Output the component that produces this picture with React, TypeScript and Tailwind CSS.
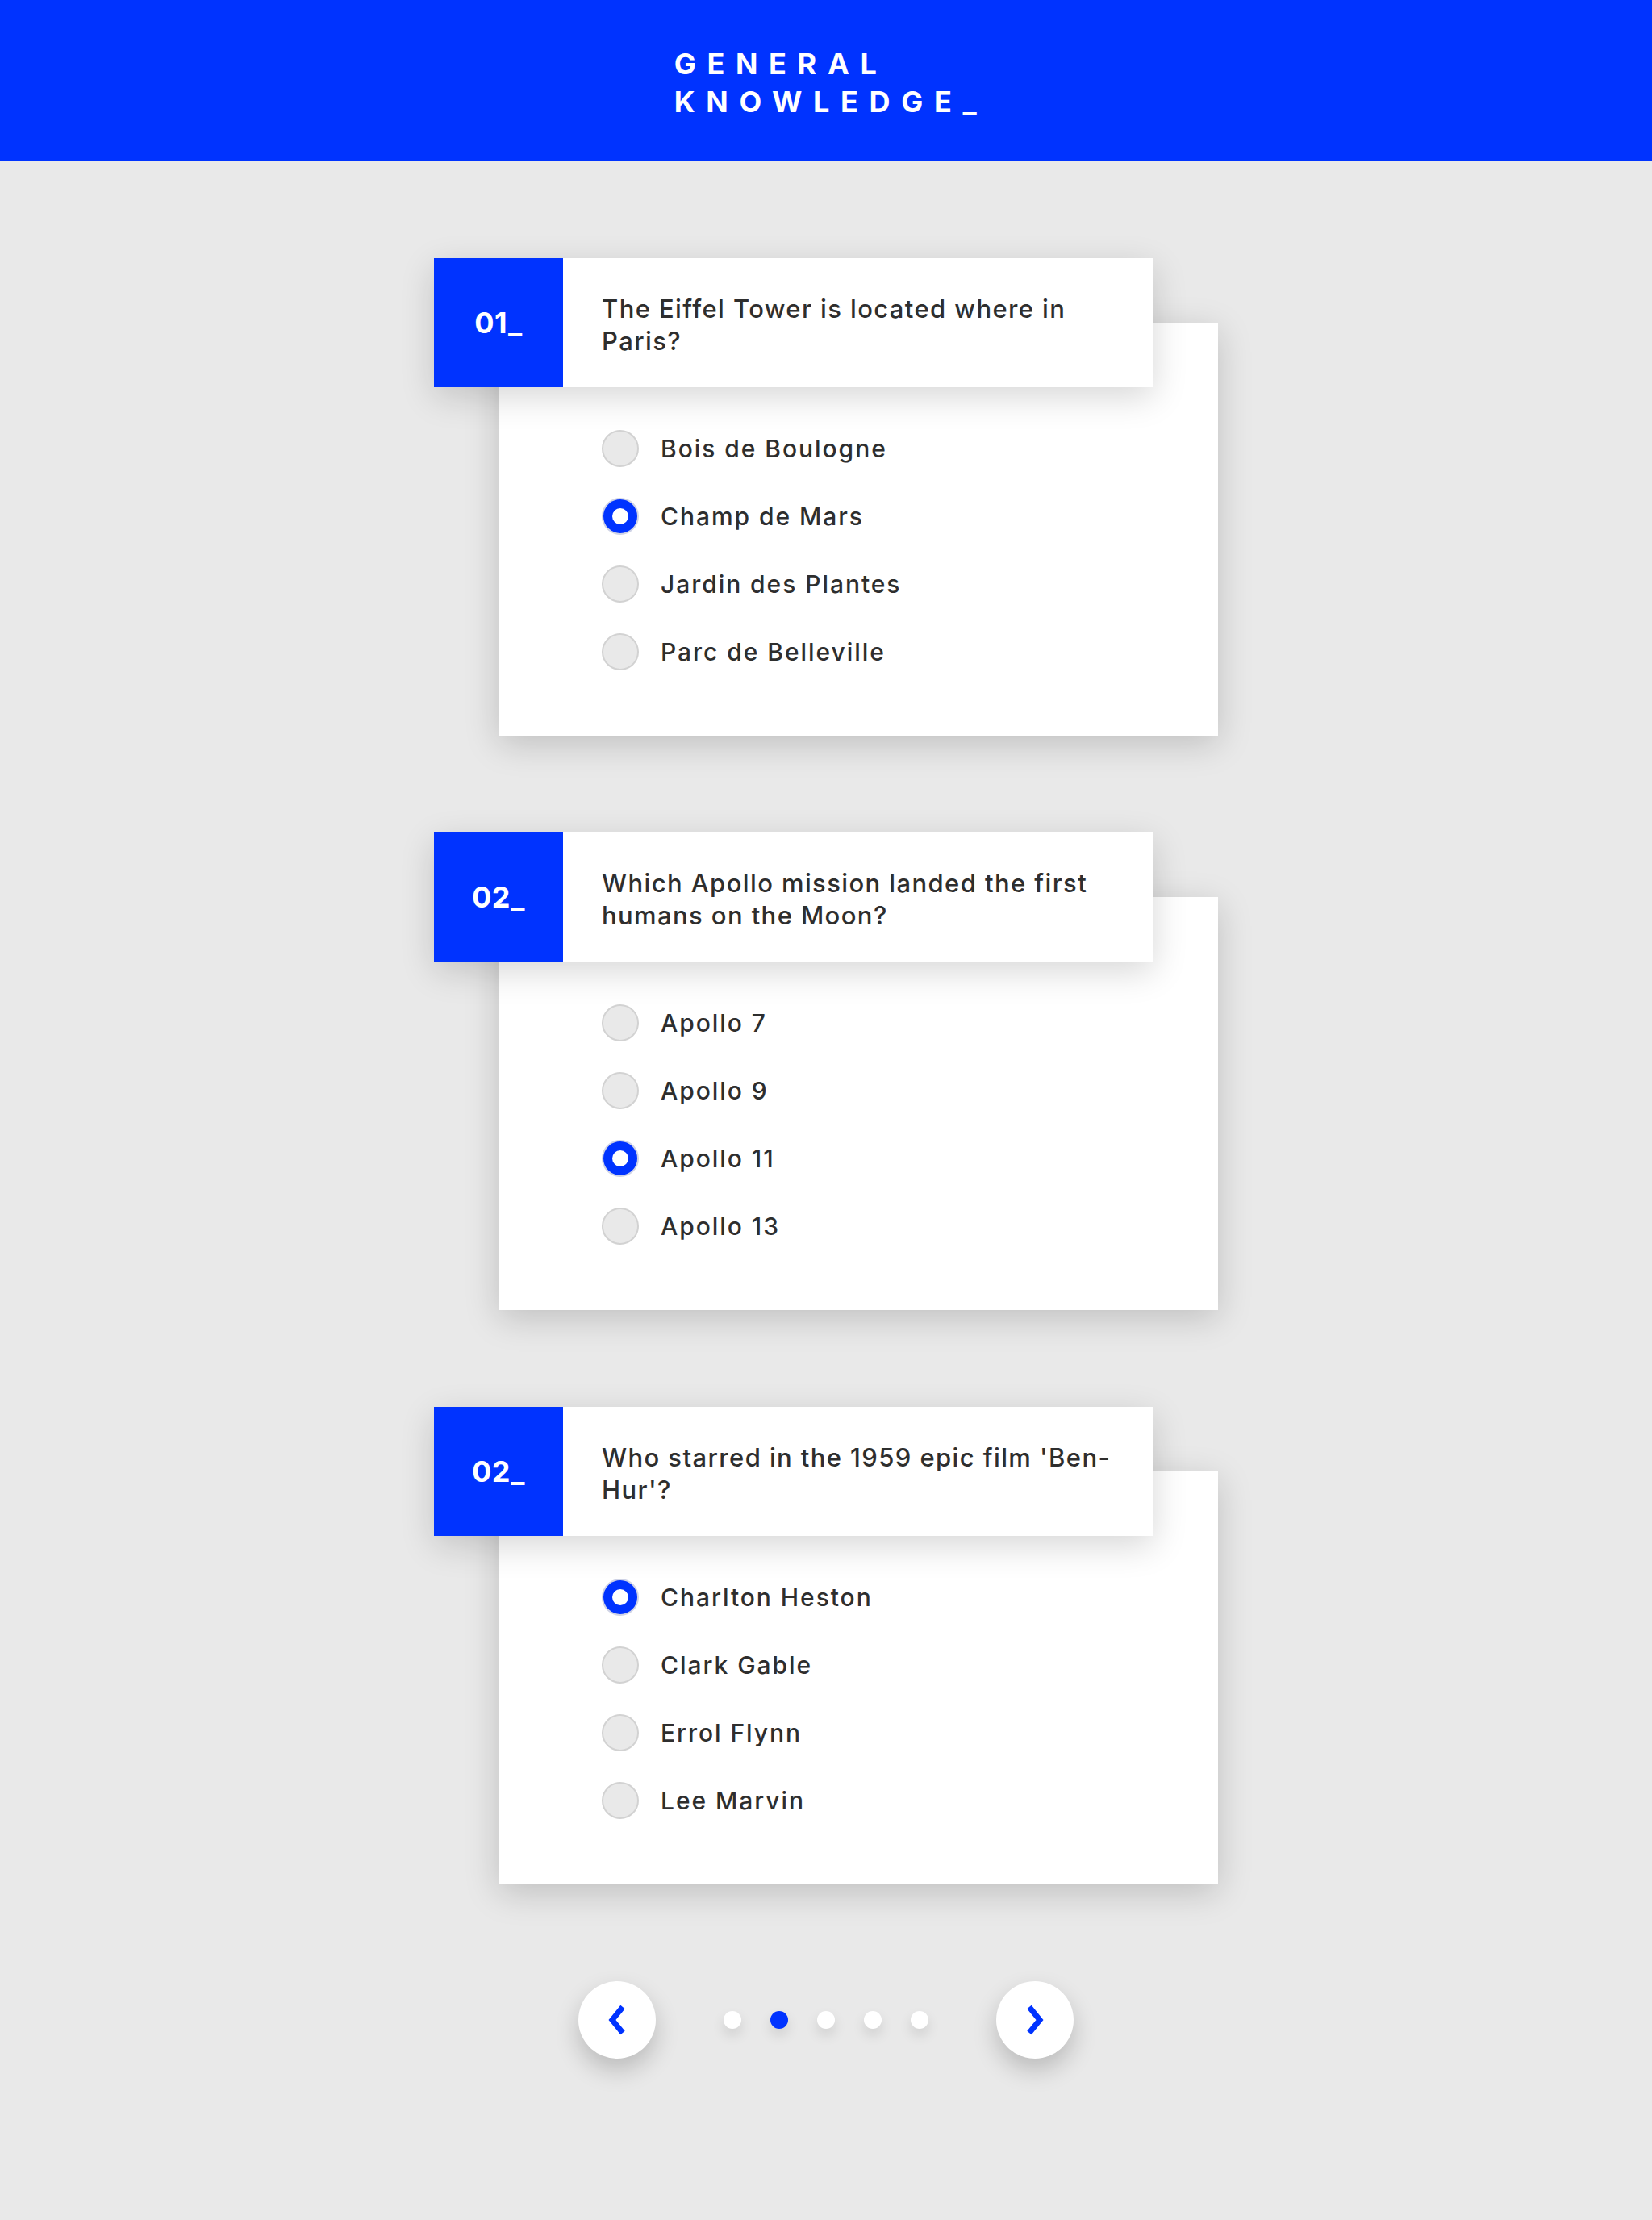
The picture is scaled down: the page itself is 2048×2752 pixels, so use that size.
import React from 'react';

const questions = [
  {
    num: '01_',
    text: 'The Eiffel Tower is located where in Paris?',
    options: ['Bois de Boulogne', 'Champ de Mars', 'Jardin des Plantes', 'Parc de Belleville'],
    selected: 1,
  },
  {
    num: '02_',
    text: 'Which Apollo mission landed the first humans on the Moon?',
    options: ['Apollo 7', 'Apollo 9', 'Apollo 11', 'Apollo 13'],
    selected: 2,
  },
  {
    num: '02_',
    text: "Who starred in the 1959 epic film 'Ben-Hur'?",
    options: ['Charlton Heston', 'Clark Gable', 'Errol Flynn', 'Lee Marvin'],
    selected: 0,
  },
];

export default function App() {
  return (
    <div className="w-[2048px] min-h-[2752px] bg-[#e9e9e9] font-['Inter','Liberation_Sans',sans-serif] flex flex-col items-center">
      <header className="w-full h-[200px] bg-[#0033ff] flex items-center justify-center">
        <h1 className="text-white font-bold text-[36px] leading-[47px] tracking-[0.38em] uppercase pt-[6px] pl-[12px]">
          General<br />Knowledge_
        </h1>
      </header>

      <main className="flex flex-col gap-[120px] pt-[120px]">
        {questions.map((q, i) => (
          <QuestionCard key={i} {...q} />
        ))}
      </main>

      <Pager />
    </div>
  );
}

function QuestionCard({ num, text, options, selected }: { num: string; text: string; options: string[]; selected: number }) {
  return (
    <section className="w-[972px] flex flex-col">
      <div className="relative z-10 flex w-[892px] h-[160px] shadow-[0_12px_40px_rgba(0,0,0,0.16)]">
        <div className="w-[160px] h-[160px] bg-[#0033ff] flex items-center justify-center text-white text-[36px] font-bold tracking-[0.02em]">
          {num}
        </div>
        <div className="flex-1 bg-white flex items-center pl-[48px] pr-[50px] pt-[6px]">
          <p className="text-[#2e2e2e] text-[31px] leading-[40px] font-medium tracking-[0.045em]">{text}</p>
        </div>
      </div>
      <div className="ml-[80px] -mt-[80px] w-[892px] bg-white pt-[114px] pb-[62px] pl-[128px] shadow-[0_10px_40px_rgba(0,0,0,0.18)]">
        {options.map((o, i) => (
          <label key={o} className="h-[84px] flex items-center gap-[27px]">
            <Radio checked={i === selected} />
            <span className="text-[#2e2e2e] text-[30px] font-medium tracking-[0.065em]">{o}</span>
          </label>
        ))}
      </div>
    </section>
  );
}

function Radio({ checked }: { checked: boolean }) {
  if (checked) {
    return (
      <span className="w-[46px] h-[46px] rounded-full bg-[#0033ff] border-2 border-[#cfd3e6] flex items-center justify-center">
        <span className="w-[20px] h-[20px] rounded-full bg-white" />
      </span>
    );
  }
  return <span className="w-[46px] h-[46px] rounded-full bg-[#e9e9e9] border-2 border-[#d2d2d2]" />;
}

function Pager() {
  return (
    <nav className="flex items-center gap-[84px] mt-[120px]">
      <button className="w-[96px] h-[96px] rounded-full bg-white flex items-center justify-center shadow-[0_14px_30px_rgba(0,0,0,0.2)]">
        <svg width="30" height="40" viewBox="0 0 30 40">
          <polyline points="22,4 9,20 22,36" fill="none" stroke="#0033ff" strokeWidth="7" />
        </svg>
      </button>
      <div className="flex items-center gap-[36px]">
        {[0, 1, 2, 3, 4].map((d) => (
          <span
            key={d}
            className={
              d === 1
                ? 'w-[22px] h-[22px] rounded-full bg-[#0033ff] shadow-[0_8px_16px_rgba(0,0,0,0.12)]'
                : 'w-[22px] h-[22px] rounded-full bg-white shadow-[0_8px_16px_rgba(0,0,0,0.12)]'
            }
          />
        ))}
      </div>
      <button className="w-[96px] h-[96px] rounded-full bg-white flex items-center justify-center shadow-[0_14px_30px_rgba(0,0,0,0.2)]">
        <svg width="30" height="40" viewBox="0 0 30 40">
          <polyline points="8,4 21,20 8,36" fill="none" stroke="#0033ff" strokeWidth="7" />
        </svg>
      </button>
    </nav>
  );
}
